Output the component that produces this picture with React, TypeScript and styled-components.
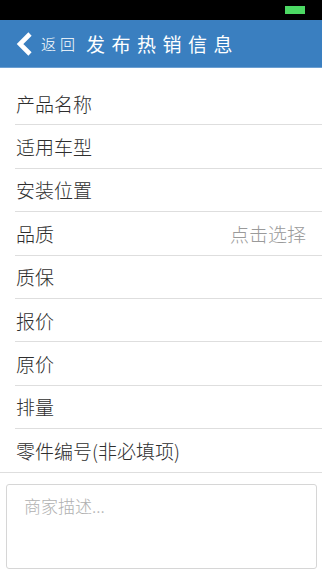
import styled, { createGlobalStyle } from "styled-components";

const GlobalStyle = createGlobalStyle`
  html, body {
    margin: 0;
    padding: 0;
    background: #ffffff;
    font-family: "Noto Sans CJK SC", "Noto Sans", sans-serif;
  }
`;

const fields = [
  { label: "产品名称" },
  { label: "适用车型" },
  { label: "安装位置" },
  { label: "品质", value: "点击选择" },
  { label: "质保" },
  { label: "报价" },
  { label: "原价" },
  { label: "排量" },
  { label: "零件编号(非必填项)", last: true },
];

export default function App() {
  return (
    <Page>
      <GlobalStyle />
      <StatusBar>
        <Battery />
      </StatusBar>
      <NavBar>
        <BackButton>
          <svg width="18" height="24" viewBox="0 0 18 24">
            <polyline
              points="15,2 5,12 15,22"
              fill="none"
              stroke="#ffffff"
              strokeWidth="4.6"
              strokeLinejoin="miter"
            />
          </svg>
          <BackText>返回</BackText>
        </BackButton>
        <Title>发布热销信息</Title>
      </NavBar>

      <FieldList>
        {fields.map((f) => (
          <FieldRow key={f.label} $last={f.last}>
            <FieldLabel>{f.label}</FieldLabel>
            {f.value && <FieldValue>{f.value}</FieldValue>}
          </FieldRow>
        ))}
      </FieldList>

      <DescriptionBox placeholder="商家描述..." />
    </Page>
  );
}

const Page = styled.div`
  width: 322px;
  height: 572px;
  overflow: hidden;
  display: flex;
  flex-direction: column;
  background: #ffffff;
`;

const StatusBar = styled.div`
  height: 20px;
  background: #000000;
  display: flex;
  justify-content: flex-end;
  align-items: flex-start;
  padding-right: 17px;
`;

const Battery = styled.div`
  width: 20px;
  height: 8px;
  margin-top: 6px;
  background: #4cd964;
`;

const NavBar = styled.div`
  height: 47px;
  background: #3a7fc0;
  border-bottom: 1px solid #6b9fd2;
  display: flex;
  align-items: center;
  color: #ffffff;
`;

const BackButton = styled.div`
  display: flex;
  align-items: center;
  padding-left: 15px;
  svg {
    display: block;
  }
`;

const BackText = styled.span`
  margin-left: 8px;
  font-size: 15px;
  font-weight: 300;
  letter-spacing: 4px;
`;

const Title = styled.span`
  margin-left: 7px;
  font-size: 19px;
  letter-spacing: 6.5px;
  font-weight: 400;
`;

const FieldList = styled.div`
  margin-top: 14px;
  display: flex;
  flex-direction: column;
`;

const FieldRow = styled.div<{ $last?: boolean }>`
  height: 43.4px;
  box-sizing: border-box;
  display: flex;
  align-items: center;
  justify-content: space-between;
  padding: 0 16px 0 ${(p) => (p.$last ? "16px" : "1px")};
  margin-left: ${(p) => (p.$last ? "0" : "15px")};
  border-bottom: 1px solid #dedede;
`;

const FieldLabel = styled.span`
  font-size: 19px;
  font-weight: 300;
  color: #2e2e2e;
`;

const FieldValue = styled.span`
  font-size: 19px;
  font-weight: 300;
  color: #9a9a9a;
`;

const DescriptionBox = styled.textarea`
  margin: 11px 5px 0 6px;
  height: 85px;
  box-sizing: border-box;
  border: 1px solid #d6d6d6;
  border-radius: 3px;
  padding: 8px 17px;
  resize: none;
  font-family: "Noto Sans CJK SC", "Noto Sans", sans-serif;
  font-size: 17px;
  font-weight: 300;
  color: #333333;
  outline: none;
  &::placeholder {
    color: #b0b0b0;
  }
`;
